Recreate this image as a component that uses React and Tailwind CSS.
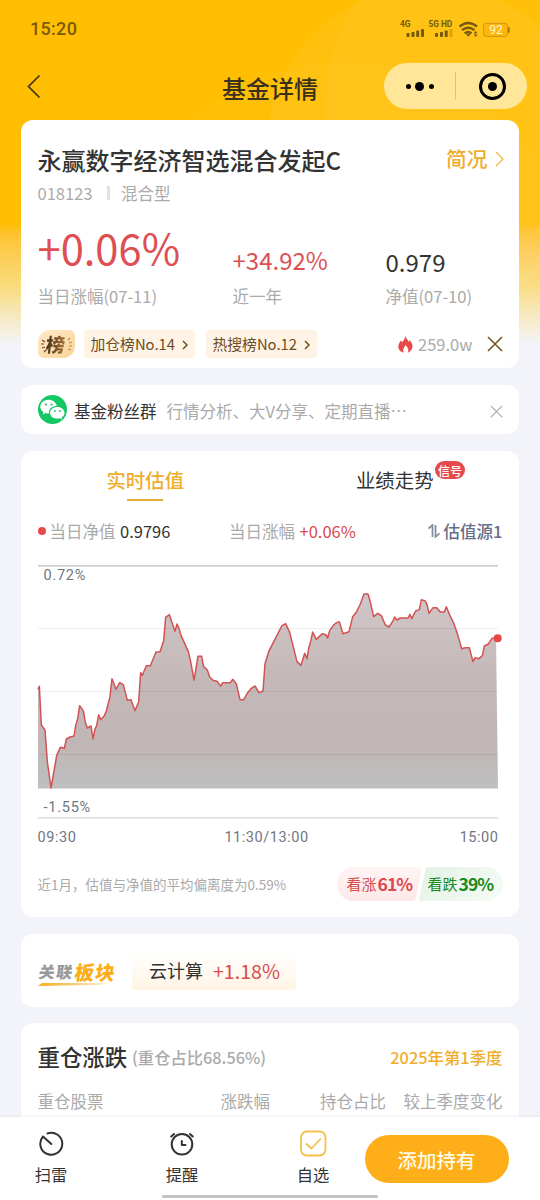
import React from "react";
import { clsx } from "clsx";

// intraday estimate, three units per pixel
const points = [
  [54, 403], [58, 394], [64, 510], [75, 525], [82, 620], [93, 699], [100, 660], [110, 602],
  [121, 577], [133, 580], [139, 552], [150, 546], [162, 543], [167, 512], [173, 491], [179, 452],
  [190, 468], [196, 502], [202, 519], [213, 513], [219, 552], [225, 522], [230, 512], [236, 479],
  [242, 494], [253, 482], [259, 468], [270, 425], [276, 371], [288, 403], [299, 383], [310, 389],
  [322, 436], [333, 434], [345, 467], [356, 440], [362, 353], [367, 361], [379, 332], [391, 332],
  [408, 291], [420, 290], [431, 257], [437, 187], [448, 179], [465, 229], [471, 207], [477, 220],
  [483, 241], [494, 265], [505, 290], [512, 320], [522, 375], [534, 304], [545, 304], [551, 335],
  [562, 345], [569, 366], [579, 376], [591, 379], [602, 393], [608, 383], [631, 383], [638, 373],
  [649, 386], [660, 434], [671, 434], [683, 413], [694, 400], [705, 393], [717, 413], [729, 408],
  [735, 326], [746, 290], [757, 268], [786, 212], [797, 206], [809, 232], [831, 320], [843, 331],
  [854, 295], [861, 311], [866, 280], [872, 259], [878, 231], [889, 253], [907, 236], [917, 239],
  [923, 249], [929, 227], [940, 211], [948, 204], [958, 200], [969, 236], [987, 230], [998, 185],
  [1010, 170], [1021, 147], [1032, 117], [1044, 117], [1050, 137], [1061, 185], [1073, 175],
  [1084, 182], [1096, 210], [1107, 216], [1118, 199], [1124, 186], [1130, 195], [1141, 189],
  [1164, 189], [1170, 178], [1175, 191], [1187, 168], [1198, 164], [1204, 134], [1216, 138],
  [1222, 152], [1227, 175], [1239, 158], [1250, 158], [1261, 171], [1273, 171], [1279, 155],
  [1290, 182], [1301, 204], [1313, 239], [1325, 281], [1336, 278], [1348, 278], [1359, 320],
  [1365, 308], [1376, 311], [1387, 302], [1393, 273], [1405, 267], [1416, 250], [1428, 250],
];

const line = points.map((p) => p.join(",")).join(" ");

const Card = ({ className, children }) => (
  <section className={clsx("rounded-xl bg-white pl-[16.5px] pr-[16.5px]", className)}>{children}</section>
);

const StatusBar = () => (
  <div className="flex h-[58px] items-center justify-between pl-[30px] pr-[29px] font-['Roboto',sans-serif]">
    <span className="pb-0.5 text-[18px] font-medium tracking-[0.3px] text-[#7a5a08]">15:20</span>
    <svg width="112" height="22" viewBox="399 18 112 22" fill="#75590c">
      <g fontSize="8.3" fontWeight="700" fontFamily="Roboto, sans-serif">
        <text x="400" y="26.5">4G</text>
        <text x="428.500" y="26.5">5G HD</text>
      </g>
      <rect x="406.500" y="33" width="3" height="4" rx="0.8" />
      <rect x="411.500" y="32" width="3" height="5" rx="0.8" />
      <rect x="416.200" y="30.500" width="3" height="6.500" rx="0.8" />
      <rect x="421" y="29" width="3" height="8" rx="0.8" />
      <rect x="435" y="33" width="3" height="4" rx="0.8" />
      <rect x="440" y="32" width="3" height="5" rx="0.8" />
      <rect x="444.700" y="30.500" width="3" height="6.500" rx="0.8" />
      <rect x="449.500" y="29" width="3" height="8" rx="0.8" fill="#d9a50b" />
      <g fill="none" stroke="#75590c" strokeWidth="2.3">
        <path d="M459.500 26.500Q468.200 19.500 477 26.500" />
        <path d="M462 30.200Q468.200 25.200 474.500 30.200" />
        <path d="M464.700 33.300Q468.200 30.600 471.500 33.300" />
      </g>
      <path d="M465.800 33.800h5l-2.500 3zM473.800 33.500l1.800-2.700 1.800 2.700zM473.800 34.500l1.800 2.500 1.800-2.500z" />
      <rect x="483.500" y="23.300" width="24" height="13.200" rx="2.800" fill="#ffb60c" stroke="#c88c12" strokeWidth="0.8" />
      <rect x="508" y="27" width="1.800" height="6" rx="0.9" fill="#a87a10" />
      <text x="489.200" y="34.200" fontSize="12" fill="#fff8c8" fontFamily="Roboto, sans-serif">92</text>
    </svg>
  </div>
);

const NavBar = () => (
  <div className="grid h-[62px] grid-cols-[1fr_auto_1fr] items-center pb-1.5 pl-[27px] pr-[13px]">
    <svg width="14" height="24" viewBox="0 0 14 24" fill="none" stroke="#443510" strokeWidth="1.7">
      <path d="M12.500 1.500L1.500 12.500L12.500 23.500" />
    </svg>
    <h1 className="-ml-[14px] pt-1 text-[24px] font-medium leading-8 text-[#3a3218]">基金详情</h1>
    <div className="flex h-[46px] w-[143px] items-center justify-self-end rounded-full bg-[#ffe699]">
      <div className="flex w-[71px] items-center justify-center gap-[4.500px]">
        <i className="size-[5px] rounded-full bg-black" />
        <i className="size-[9px] rounded-full bg-black" />
        <i className="size-[5px] rounded-full bg-black" />
      </div>
      <div className="h-7 w-px bg-[#dfc477]" />
      <div className="flex flex-1 items-center justify-center pl-[2px]">
        <div className="flex size-[27px] items-center justify-center rounded-full border-[3px] border-black">
          <i className="size-[9px] rounded-full bg-black" />
        </div>
      </div>
    </div>
  </div>
);

const Stat = ({ value, label, className }) => (
  <div className="flex flex-col justify-end">
    <span className={className}>{value}</span>
    <span className="text-[16.5px] leading-6 text-[#aaa]">{label}</span>
  </div>
);

const RankChip = ({ children }) => (
  <div className="flex h-7 w-[111px] items-center justify-between rounded-[4px] bg-[#fff3e6] pl-[7px] pr-[7px] pt-px text-[14.8px] text-[#6f4d1c]">
    <span className="whitespace-nowrap">{children}</span>
    <svg width="6" height="10" viewBox="0 0 6 10" fill="none" stroke="currentColor" strokeWidth="1.5">
      <path d="M1 1l4 4-4 4" />
    </svg>
  </div>
);

const Cross = ({ size, color, width }) => (
  <svg width={size} height={size} viewBox="0 0 16 16" fill="none" stroke={color} strokeWidth={width}>
    <path d="M1 1l14 14M15 1L1 15" />
  </svg>
);

const FundCard = () => (
  <Card className="h-[248px] pt-4">
    <div className="flex h-12 items-center justify-between">
      <h2 className="text-[24px] font-medium text-[#333]">永赢数字经济智选混合发起C</h2>
      <div className="-mr-px flex items-center gap-[7px] pb-0.5 text-[20.7px] font-medium text-[#f0ad2c]">
        简况
        <svg width="9" height="16" viewBox="0 0 9 16" fill="none" stroke="#f3b94b" strokeWidth="1.4">
          <path d="M1 1l7 7-7 7" />
        </svg>
      </div>
    </div>
    <div className="-mt-px flex h-5 items-center text-[16.5px] text-[#aaa]">
      018123
      <i className="ml-[14.5px] mr-[11px] h-3.5 w-[3px] bg-[#e2e2e2]" />
      混合型
    </div>
    <div className="mt-px grid h-[104px] grid-cols-[195px_153px_1fr]">
      <Stat value="+0.06%" label="当日涨幅(07-11)" className="mb-[13px] text-[41.7px] leading-12 text-[#dd4f52]" />
      <Stat value="+34.92%" label="近一年" className="mb-2 text-[24px] leading-8 text-[#dd4f52]" />
      <Stat value="0.979" label="净值(07-10)" className="mb-1.5 text-[24px] leading-8 text-[#333]" />
    </div>
    <div className="mt-[22px] flex items-center">
      <div className="relative mr-[9px] flex h-7 w-[37px] items-center justify-center rounded-tl-[12px] rounded-tr-[6px] rounded-br-[12px] rounded-bl-[6px] bg-linear-to-br from-[#ffe9c8] to-[#fbd49a]">
        <svg className="absolute inset-0" width="37" height="28" viewBox="0 0 37 28" fill="none" stroke="#6b4a20" strokeWidth="1.2">
          <path d="M4 10l3 2M3 14h3M4 18l3-1M6 22l2-2" />
          <path d="M30 10l2-2M31 13l3-1M31 16h3M30 19l3 1" stroke="#b58a50" />
        </svg>
        <span className="-skew-x-6 bg-linear-to-r from-[#45301a] to-[#a87838] bg-clip-text text-[19px] font-black leading-7 text-transparent">榜</span>
      </div>
      <RankChip>加仓榜No.14</RankChip>
      <div className="w-[11px]" />
      <RankChip>热搜榜No.12</RankChip>
      <div className="ml-auto flex items-center text-[16.5px] leading-7 text-[#aaa]">
        <svg className="mr-[5px]" width="15" height="17" viewBox="0 0 15 17" fill="#e84a4a">
          <path d="M7.300 0C8 2.500 10 3.500 10.600 6C11.300 5.500 11.500 4.800 11.500 4C13.500 6 14.700 8.200 14.500 10.800C14.300 13.800 12.300 16 9.800 16.700C11 14.600 10.400 12.300 7.600 9C7.300 10.600 4.200 12.500 5.600 16.700C2.500 16 .3 13.700 .3 10.600C.3 7.600 2 6.500 2.500 4.500C3.300 5 3.700 5.600 3.900 6.300C5.600 4.500 6.900 2.700 7.300 0Z" />
        </svg>
        259.0w
        <div className="ml-[14px]">
          <Cross size={16} color="#76531f" width={1.6} />
        </div>
      </div>
    </div>
  </Card>
);

const GroupCard = () => (
  <Card className="mt-[17px] flex h-[49px] items-center">
    <svg width="29" height="29" viewBox="0 0 29 29">
      <circle cx="14.500" cy="14.500" r="14.500" fill="#14c765" />
      <path d="M10.700 4.800C6 4.800 2.300 7.800 2.300 11.700C2.300 13.900 3.500 15.800 5.400 17.100L4.700 19.500L7.500 18.100C8.600 18.500 9.700 18.600 11 18.600C10.200 14 14 10.800 18.800 10.900C18 7.400 14.700 4.800 10.700 4.800Z" fill="#fff" />
      <path d="M19.300 11.900C15.200 11.900 12 14.500 12 17.700C12 21 15.200 23.600 19.300 23.600C20.200 23.600 21.100 23.500 21.900 23.200L24.200 24.400L23.600 22.400C25.500 21.300 26.500 19.600 26.500 17.700C26.500 14.500 23.400 11.900 19.300 11.900Z" fill="#fff" />
      <g fill="#14c765">
        <circle cx="7.900" cy="9.500" r="1.100" />
        <circle cx="13.500" cy="9.500" r="1.100" />
        <circle cx="16.900" cy="16" r="0.900" />
        <circle cx="21.800" cy="16" r="0.900" />
      </g>
    </svg>
    <span className="ml-[7.5px] pt-[3px] text-[16.5px] text-[#333]">基金粉丝群</span>
    <span className="ml-[10px] pt-[3px] text-[16.5px] text-[#aaa]">行情分析、大V分享、定期直播⋯</span>
    <div className="ml-auto pt-[3px]">
      <Cross size={13} color="#aaa" width={1.5} />
    </div>
  </Card>
);

const Chart = () => (
  <div className="relative h-[255px] font-['Roboto',sans-serif] text-[14.5px] leading-4 tracking-[0.75px] text-[#6f7684]">
    <svg className="block overflow-visible" width="464" height="255" viewBox="54 30 1392 765">
      <defs>
        <linearGradient id="area" gradientUnits="userSpaceOnUse" x1="0" x2="0" y1="117" y2="700">
          <stop offset="0" stopColor="#d0c7c8" />
          <stop offset="0.45" stopColor="#c4b7b7" />
          <stop offset="0.78" stopColor="#c1b6b6" />
          <stop offset="0.9" stopColor="#bebbbb" />
          <stop offset="1" stopColor="#bfbfbf" />
        </linearGradient>
      </defs>
      <polygon points={`54,700 ${line} 1434,700`} fill="url(#area)" />
      <g stroke="#000" strokeOpacity="0.07" strokeWidth="3">
        <path d="M54 220.500H1434M54 409.500H1434M54 598.500H1434M54 700.500H1434" />
      </g>
      <path d="M54 32.500H1434" stroke="#bcbcbc" strokeWidth="4" />
      <path d="M54 788.500H1434" stroke="#d4d5d7" strokeWidth="4" />
      <polyline points={line} fill="none" stroke="#d35253" strokeWidth="4.500" strokeLinejoin="round" />
      <circle cx="1433" cy="250" r="12" fill="#e64747" />
    </svg>
    <span className="absolute left-[6px] top-[3px]">0.72%</span>
    <span className="absolute bottom-[4px] left-[6px]">-1.55%</span>
  </div>
);

const EstimateCard = () => (
  <Card className="mt-[17px] h-[466px]">
    <div className="grid h-[50px] grid-cols-2 pt-[13px]">
      <div className="flex flex-col items-center pr-[17px] text-[19.4px] font-medium leading-8 text-[#f0ad2c]">
        实时估值
        <i className="mt-[3px] h-[1.500px] w-9 shrink-0 bg-[#e5ae3c]" />
      </div>
      <div className="flex justify-center pl-[17px] text-[19.4px] leading-8 text-[#333]">
        <div className="relative">
          业绩走势
          <span className="absolute -top-[3px] left-[79px] flex h-[18px] w-[30px] items-center justify-center rounded-full bg-[#e64a4c] pt-px text-[12px] font-medium leading-none text-white">
            信号
          </span>
        </div>
      </div>
    </div>
    <div className="mt-[18px] flex h-6 items-center text-[16.5px] leading-6">
      <i className="mr-[4px] size-2 rounded-full bg-[#e84a4a]" />
      <span className="text-[#aaa]">当日净值</span>
      <span className="ml-[4.500px] w-[109px] text-[#333]">0.9796</span>
      <span className="text-[#aaa]">当日涨幅</span>
      <span className="ml-[4.500px] text-[#d64b4e]">+0.06%</span>
      <span className="ml-auto flex items-center gap-[4px] font-medium text-[#666e85]">
        <svg width="12" height="14" viewBox="0 0 12 14" fill="none" stroke="#8389a0" strokeWidth="1.700">
          <path d="M.5 4.500L4.500 1V13M7.500 1V12.800L11.500 9.300" />
        </svg>
        估值源1
      </span>
    </div>
    <div className="mt-[22px]">
      <Chart />
    </div>
    <div className="mt-[10px] flex h-4 justify-between pr-[4px] font-['Roboto',sans-serif] text-[14.5px] leading-4 tracking-[0.55px] text-[#6f7684]">
      <span>09:30</span>
      <span className="pr-[3px]">11:30/13:00</span>
      <span>15:00</span>
    </div>
    <div className="mt-[21px] flex h-[34px] items-center justify-between">
      <span className="text-[13.5px] text-[#aaa]">近1月，估值与净值的平均偏离度为0.59%</span>
      <div className="relative flex h-[34px] w-[166px]">
        <svg className="absolute inset-0" width="166" height="34" viewBox="0 0 166 34">
          <defs>
            <linearGradient id="up" x2="0" y2="1">
              <stop offset="0" stopColor="#fff4f4" />
              <stop offset="1" stopColor="#fde8e9" />
            </linearGradient>
            <linearGradient id="down" x2="1" y2="0.400">
              <stop offset="0" stopColor="#e3f2e5" />
              <stop offset="1" stopColor="#f3faf3" />
            </linearGradient>
          </defs>
          <path d="M17 0H82Q85 0 84.300 3L79 31.500Q78.400 34 76 34H17A17 17 0 0 1 17 0Z" fill="url(#up)" />
          <path d="M92 0H149A17 17 0 0 1 149 34H84Q81.500 34 82.200 31L88.500 2.500Q89 0 92 0Z" fill="url(#down)" />
        </svg>
        <span className="relative flex w-[82px] items-center pl-[10px] text-[15px] text-[#d84b4e]">
          看涨<b className="ml-px text-[17.500px] font-bold tracking-[-0.900px]">61%</b>
        </span>
        <span className="relative flex flex-1 items-center pl-[9px] text-[15px] text-[#1c8a1c]">
          看跌<b className="ml-px text-[17.500px] font-bold tracking-[-0.900px]">39%</b>
        </span>
      </div>
    </div>
  </Card>
);

const SectorCard = () => (
  <Card className="mt-[17px] flex h-[73px] items-center">
    <div className="w-[78px] pt-1.5">
      <div className="flex -skew-x-8 items-end gap-px whitespace-nowrap pl-px font-black leading-[21px]">
        <span className="text-[16px] tracking-[1.500px] text-[#999]">关联</span>
        <span className="text-[19.500px] tracking-[1px] text-[#fbae17]">板块</span>
      </div>
      <svg className="block" width="78" height="5" viewBox="0 0 78 5">
        <defs>
          <linearGradient id="swoosh">
            <stop offset="0" stopColor="#fbae17" />
            <stop offset="0.4" stopColor="#f3c76d" />
            <stop offset="1" stopColor="#fff5df" />
          </linearGradient>
        </defs>
        <path d="M4 1H74L60 3L0 4Z" fill="url(#swoosh)" />
      </svg>
    </div>
    <div className="ml-[16.500px] flex h-[38px] w-[164px] items-center gap-[10px] rounded-[4px] bg-linear-to-b from-white to-[#fff4e4] pl-[17px] text-[18px] text-[#333]">
      云计算
      <span className="text-[19.600px] text-[#d84b4e]">+1.18%</span>
    </div>
  </Card>
);

const HoldingsCard = () => (
  <Card className="mt-4 h-[120px] pt-4">
    <div className="flex h-9 items-center">
      <h2 className="text-[22.400px] font-medium text-[#333]">重仓涨跌</h2>
      <span className="ml-[5px] text-[16.300px] font-medium text-[#aaa]">(重仓占比68.56%)</span>
      <span className="ml-auto text-[16.400px] font-medium text-[#f0ad2c]">2025年第1季度</span>
    </div>
    <div className="mt-[14px] flex h-6 items-center text-[16.500px] text-[#aaa]">
      <span className="w-[183px]">重仓股票</span>
      <span className="w-[99.500px]">涨跌幅</span>
      <span>持仓占比</span>
      <span className="ml-auto">较上季度变化</span>
    </div>
  </Card>
);

const Tab = ({ label, children }) => (
  <div className="flex w-[50px] flex-col items-center">
    <svg width="28" height="28" viewBox="0 0 28 28" fill="none" stroke="#333" strokeWidth="2" strokeLinecap="round" strokeLinejoin="round">
      {children}
    </svg>
    <span className="mt-[5px] text-[16.300px] leading-6 text-[#333]">{label}</span>
  </div>
);

const BottomBar = () => (
  <footer className="relative h-[83px] shrink-0 bg-white shadow-[0_-1px_3px_rgba(0,0,0,0.06)]">
    <div className="flex pl-[26px] pr-8 pt-[12px]">
      <div className="flex w-[312px] justify-between">
        <Tab label="扫雷">
          <path d="M10.500 4.400A11 11 0 1 1 6 7.500L14.300 15" />
        </Tab>
        <Tab label="提醒">
          <circle cx="14" cy="15.300" r="10.300" />
          <path d="M13.800 12V16H17.500M3.200 7.500L6 5M24.800 7.500L22 5" />
        </Tab>
        <Tab label="自选">
          <rect x="2" y="2.500" width="24.500" height="24" rx="6" stroke="#f3c04c" strokeWidth="1.800" />
          <path d="M7.500 15L12.500 19.500L21.500 10" stroke="#f3c04c" strokeWidth="1.800" />
        </Tab>
      </div>
      <button className="-mr-[0.500px] ml-auto mt-[6px] h-12 w-[144px] rounded-full bg-[#feae18] pt-px text-[19.500px] font-medium text-[#fffbe6]">
        添加持有
      </button>
    </div>
    <div className="absolute bottom-[2px] left-[162px] h-[3px] w-[216px] rounded-full bg-[#c2c2c2]" />
  </footer>
);

const App = () => {
  return (
    <div className="relative flex h-[1200px] w-[540px] flex-col overflow-hidden bg-[#f3f4fa] font-['Noto_Sans_CJK_SC',sans-serif]">
      <div className="absolute inset-x-0 top-0 h-[345px] bg-linear-to-b from-[#ffbe02] from-65% via-[#f9dc7c] via-83% to-[#f3f4fa]">
        <svg className="absolute inset-0" width="540" height="345" viewBox="0 0 540 345" fill="#fff">
          <circle cx="430" cy="149" r="164" fillOpacity="0.05" />
          <circle cx="533" cy="110" r="208" fillOpacity="0.03" />
          <circle cx="345" cy="300" r="238" fillOpacity="0.02" />
        </svg>
      </div>
      <div className="relative">
        <StatusBar />
        <NavBar />
      </div>
      <main className="relative min-h-0 flex-1 overflow-hidden px-[21px]">
        <FundCard />
        <GroupCard />
        <EstimateCard />
        <SectorCard />
        <HoldingsCard />
      </main>
      <BottomBar />
    </div>
  );
};

export default App;
